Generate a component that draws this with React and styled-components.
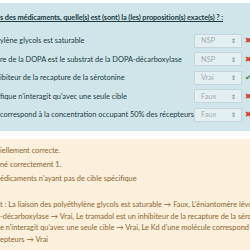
import styled, { createGlobalStyle } from "styled-components";

const GlobalStyle = createGlobalStyle`
  body {
    margin: 0;
    background: #fff;
    font-family: Lato, "Open Sans", sans-serif;
  }
`;

const answers = [
  { text: "ylène glycols est saturable", value: "NSP", ok: false },
  { text: "re de la DOPA est le substrat de la DOPA-décarboxylase", value: "NSP", ok: false },
  { text: "ibiteur de la recapture de la sérotonine", value: "Vrai", ok: true },
  { text: "fique n'interagit qu'avec une seule cible", value: "Faux", ok: false },
  { text: "correspond à la concentration occupant 50% des récepteurs", value: "Faux", ok: false },
];

export default function App() {
  return (
    <>
      <GlobalStyle />
      <Page>
        <Formulation>
          <QuestionText>
            s des médicaments, quelle(s) est (sont) la (les) proposition(s) exacte(s) ? :
          </QuestionText>
          {answers.map((a) => (
            <AnswerRow key={a.text}>
              <Label>{a.text}</Label>
              <Select>
                <span>{a.value}</span>
                <Arrows>⇕</Arrows>
              </Select>
              <Mark $ok={a.ok}>{a.ok ? "✔" : "✖"}</Mark>
            </AnswerRow>
          ))}
        </Formulation>
        <Outcome>
          <Para>iellement correcte.</Para>
          <Para>né correctement 1.</Para>
          <Para>édicaments n'ayant pas de cible spécifique</Para>
          <RightAnswer>
            <Line>t : La liaison des polyéthylène glycols est saturable → Faux, L'éniantomère lévo</Line>
            <Line>-décarboxylase → Vrai, Le tramadol est un inhibiteur de la recapture de la séro</Line>
            <Line>e n'interagit qu'avec une seule cible → Vrai, Le Kd d'une molécule correspond à</Line>
            <Line>epteurs → Vrai</Line>
          </RightAnswer>
        </Outcome>
      </Page>
    </>
  );
}

const Page = styled.div`
  width: 250px;
  height: 250px;
  overflow: hidden;
  padding-top: 3px;
  box-sizing: border-box;
  font-size: 7.4px;
  line-height: 11.7px;
  white-space: nowrap;
`;

const Formulation = styled.div`
  background: #cfe5ea;
  color: #1b3b42;
  padding: 9px 0 7px;
`;

const QuestionText = styled.div`
  font-weight: 700;
  letter-spacing: -0.12px;
  text-decoration: underline;
  margin-bottom: 8px;
`;

const AnswerRow = styled.div`
  display: flex;
  align-items: center;
  height: 18.5px;
`;

const Label = styled.div`
  flex: 1;
  overflow: hidden;
`;

const Select = styled.div`
  width: 48px;
  height: 14px;
  box-sizing: border-box;
  display: flex;
  align-items: center;
  justify-content: space-between;
  padding: 0 5px 0 6px;
  background: #e3eff2;
  border: 1px solid #c4d6db;
  color: #a0adb1;
  margin-right: 3px;
`;

const Arrows = styled.span`
  font-size: 6px;
  color: #6f7f83;
`;

const Mark = styled.span`
  width: 5px;
  font-size: 8px;
  color: ${(p) => (p.$ok ? "#3f8a2a" : "#d33a2c")};
`;

const Outcome = styled.div`
  margin-top: 8px;
  background: #fcefdc;
  color: #8a6631;
  padding: 6px 0 20px;
  min-height: 120px;
`;

const Para = styled.div`
  margin-bottom: 2.3px;
`;

const RightAnswer = styled.div`
  margin-top: 14px;
`;

const Line = styled.div``;
